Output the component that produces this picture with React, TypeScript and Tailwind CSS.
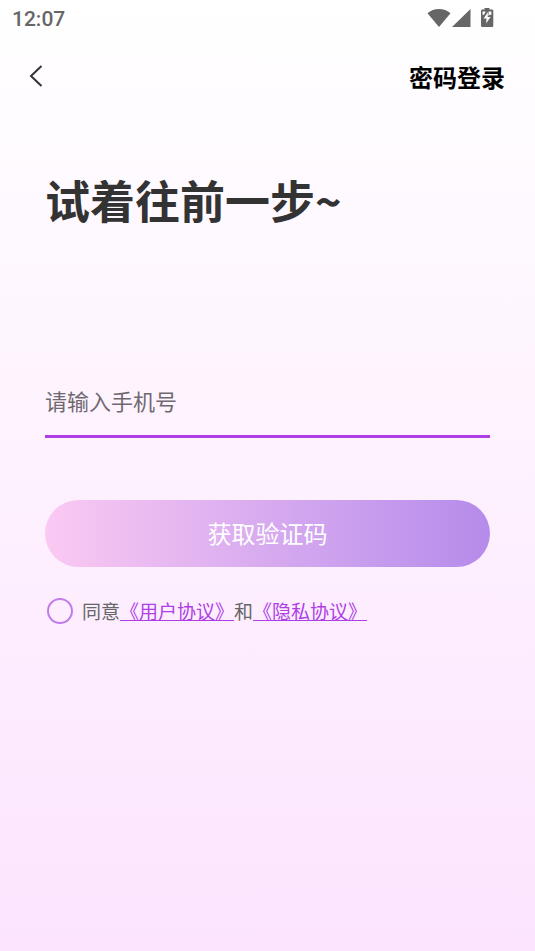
import React, { useState } from "react";

function StatusBar() {
  return (
    <div className="flex h-9 items-center justify-between pt-0.5 pr-10 pl-3 text-[#666666]">
      <span className="font-[Roboto,sans-serif] text-[21px] leading-7 font-medium">12:07</span>
      <div className="flex items-start pb-0.5" aria-hidden="true">
        <svg width="24" height="20" viewBox="0 0 24 20" fill="currentColor">
          <path d="M0.5 5.2C3.6 2.6 7.6 1 12 1s8.400 1.600 11.500 4.200L12 19z" />
        </svg>
        <svg width="20" height="20" viewBox="0 0 20 20" fill="currentColor">
          <path d="M19.500 1v18H1z" />
        </svg>
        <svg className="ml-2" width="16" height="20" viewBox="0 0 16 20">
          <path
            d="M5.500 0h5v1.500H13a1.300 1.300 0 0 1 1.300 1.300v14.900a1.300 1.300 0 0 1-1.300 1.300H3.300A1.300 1.300 0 0 1 2 17.700V2.800A1.300 1.300 0 0 1 3.300 1.500h2.200z"
            fill="currentColor"
          />
          <path d="M3.500 3.500h3.200L5 6.700H3.500zM9.600 3.500h2.800v3.200h-1.600L9.400 8z" fill="#fff" />
          <path d="M9 4L4.600 10.500h3L7 15.500l4.600-6.600H8.700z" fill="#fff" />
        </svg>
      </div>
    </div>
  );
}

export default function App() {
  const [phone, setPhone] = useState("");
  const [agreed, setAgreed] = useState(false);

  return (
    <div className="flex min-h-screen flex-col bg-linear-to-b from-white to-[#fce4fe] font-['Noto_Sans_CJK_SC',sans-serif]">
      <StatusBar />
      <header className="flex h-20 items-center justify-between pr-[30px] pl-6">
        <button type="button" aria-label="返回" className="text-[#333333]">
          <svg width="24" height="24" viewBox="0 0 24 24" fill="none" stroke="currentColor" strokeWidth="2">
            <path d="M17.500 2L7 12l10.500 10" />
          </svg>
        </button>
        <button type="button" className="pt-0.5 text-2xl font-bold text-black">
          密码登录
        </button>
      </header>

      <main className="px-[45px] pt-[52px]">
        <h1 className="text-[45px] leading-16 font-bold text-[#333333]">试着往前一步~</h1>

        <form className="mt-[138px]" onSubmit={(e) => e.preventDefault()}>
          <input
            type="tel"
            aria-label="手机号"
            placeholder="请输入手机号"
            value={phone}
            onChange={(e) => setPhone(e.target.value)}
            className="block h-17 w-full border-b-3 border-[#ae3fe6] bg-transparent pb-1.5 text-[22px] text-[#333333] outline-none placeholder:text-[#6f696f]"
          />
          <button
            type="submit"
            className="mt-[62px] block h-[67px] w-full rounded-full bg-linear-to-r from-[#fbc9f2] to-[#b58beb] pb-0.5 text-2xl text-white"
          >
            获取验证码
          </button>
          <div className="mt-7 flex items-center gap-[9px] pl-0.5 text-[19px] leading-8 text-[#666666]">
            <input
              id="agree"
              type="checkbox"
              checked={agreed}
              onChange={(e) => setAgreed(e.target.checked)}
              className="size-[26px] shrink-0 appearance-none rounded-full border-2 border-[#c17cec] checked:bg-[#ae3fe6]"
            />
            <p>
              <label htmlFor="agree">同意</label>
              <a href="#terms" className="text-[#ae3fe6] underline">《用户协议》</a>
              和
              <a href="#privacy" className="text-[#ae3fe6] underline">《隐私协议》</a>
            </p>
          </div>
        </form>
      </main>
    </div>
  );
}
